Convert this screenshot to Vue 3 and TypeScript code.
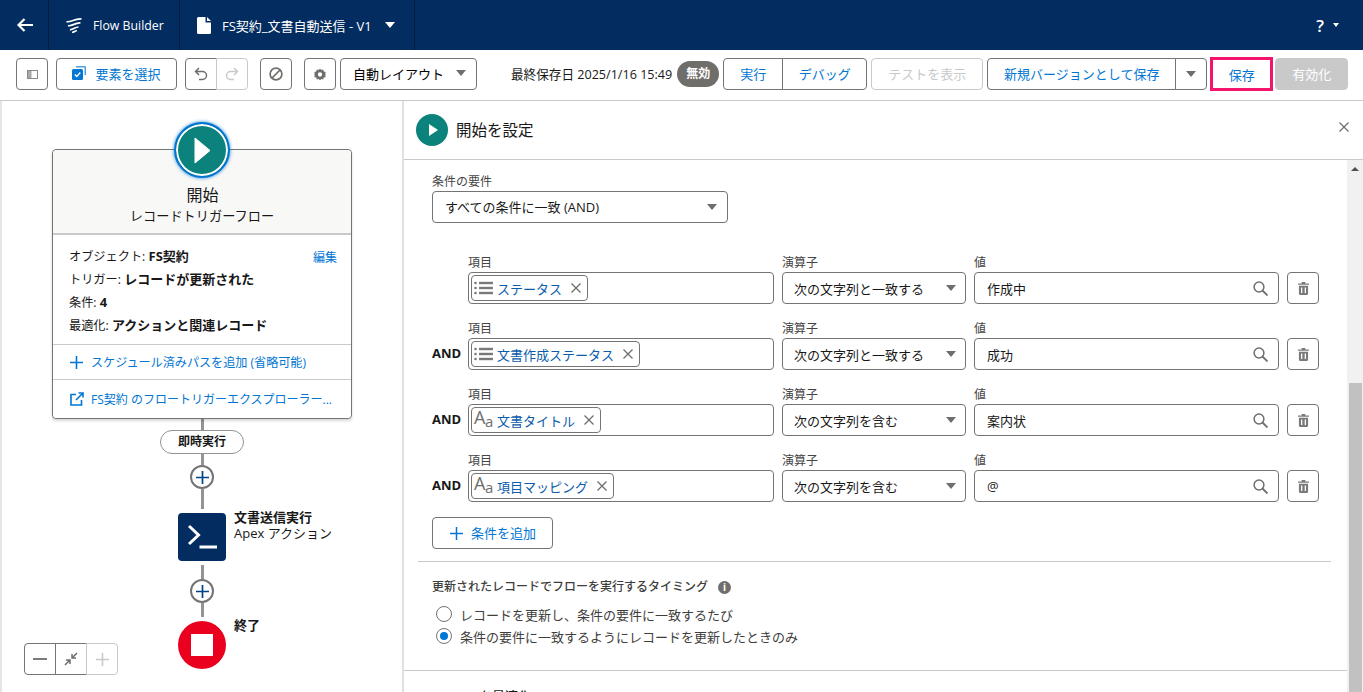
<script setup lang="ts">
interface Row {
  and: boolean
  icon: 'list' | 'text'
  field: string
  op: string
  value: string
}
const rows: Row[] = [
  { and: false, icon: 'list', field: 'ステータス', op: '次の文字列と一致する', value: '作成中' },
  { and: true, icon: 'list', field: '文書作成ステータス', op: '次の文字列と一致する', value: '成功' },
  { and: true, icon: 'text', field: '文書タイトル', op: '次の文字列を含む', value: '案内状' },
  { and: true, icon: 'text', field: '項目マッピング', op: '次の文字列を含む', value: '@' }
]
</script>

<template>
  <div class="app">
    <header class="topbar">
      <div class="tb-cell back">
        <svg width="16" height="14" viewBox="0 0 16 14"><path d="M7.500 1 1.500 7l6 6M1.500 7H16" fill="none" stroke="#fff" stroke-width="2.200" /></svg>
      </div>
      <div class="tb-cell app-name">
        <svg width="16" height="15" viewBox="0 0 16 15"><path d="M.5 3.500C4 5 8 .5 15.500 1M2 7.500C5 9 9 4.500 14.500 5M4 11.500c2 1 5-2.500 8.500-2.500M6 14.500c1.500 0 3-1.500 5-2" fill="none" stroke="#fff" stroke-width="1.700" /></svg>
        <span>Flow Builder</span>
      </div>
      <div class="tb-cell doc">
        <svg width="14" height="17" viewBox="0 0 14 17"><path d="M1.500 0H8.500V5.500H14V15.500A1.500 1.500 0 0 1 12.500 17H1.500A1.500 1.500 0 0 1 0 15.500V1.500A1.500 1.500 0 0 1 1.500 0ZM10 0 14 4H10Z" fill="#fff" /></svg>
        <span class="doc-name">FS契約_文書自動送信 - V1</span>
        <i class="caret white"></i>
      </div>
      <div class="tb-help"><span>?</span><i class="caret white tiny"></i></div>
    </header>

    <div class="toolbar">
      <button class="btn sq first">
        <svg width="11" height="9" viewBox="0 0 11 9"><rect x=".5" y=".5" width="10" height="8" fill="#fff" stroke="#8a8a8a" /><rect x="1" y="1" width="3.500" height="7" fill="#a8a8a8" /></svg>
      </button>
      <button class="btn blue select-el">
        <svg width="14" height="14" viewBox="0 0 14 14"><path d="M4 0h9a1 1 0 0 1 1 1v8h-1.500V1.500H4Z" fill="#0176d3" opacity=".7" /><rect y="3" width="11" height="11" rx="1.500" fill="#0176d3" /><path d="m2.800 8.500 2 2 3.500-4" stroke="#fff" stroke-width="1.300" fill="none" /></svg>
        <span>要素を選択</span>
      </button>
      <div class="group undo">
        <button class="btn sq">
          <svg width="14" height="14" viewBox="0 0 14 14"><path d="M5 1 1.500 4.500 5 8M2 4.500h6.500a4 4 0 0 1 0 8H5" fill="none" stroke="#706e6b" stroke-width="1.500" /></svg>
        </button>
        <button class="btn sq off">
          <svg width="14" height="14" viewBox="0 0 14 14"><path d="M9 1l3.500 3.500L9 8M12 4.500H5.500a4 4 0 0 0 0 8H9" fill="none" stroke="#c9c9c9" stroke-width="1.500" /></svg>
        </button>
      </div>
      <button class="btn sq stop">
        <svg width="14" height="14" viewBox="0 0 14 14"><circle cx="7" cy="7" r="5.900" fill="none" stroke="#706e6b" stroke-width="1.700" /><path d="M3 11 11 3" stroke="#706e6b" stroke-width="1.700" /></svg>
      </button>
      <button class="btn sq gear">
        <svg width="12" height="13" viewBox="0 0 14 14"><path fill-rule="evenodd" fill="#706e6b" d="M7 0l1.400 1.800 2.300-.5.700 2.200 2.200.7-.5 2.300L14 7l-.9.500.5 2.300-2.200.7-.7 2.200-2.300-.5L7 14l-1.400-1.800-2.300.5-.7-2.200-2.200-.7.500-2.300L0 7l.9-.5-.5-2.300 2.200-.7.700-2.200 2.300.5ZM7 4.500a2.500 2.500 0 1 0 0 5 2.500 2.500 0 0 0 0-5Z" /></svg>
      </button>
      <button class="btn layout">
        <span>自動レイアウト</span><i class="caret"></i>
      </button>
      <span class="saved">最終保存日 2025/1/16 15:49</span>
      <span class="badge">無効</span>
      <div class="group run">
        <button class="btn blue run-a">実行</button>
        <button class="btn blue run-b">デバッグ</button>
      </div>
      <button class="btn test">テストを表示</button>
      <div class="group newver">
        <button class="btn blue nv-a">新規バージョンとして保存</button>
        <button class="btn nv-b"><i class="caret"></i></button>
      </div>
      <button class="btn blue save">保存</button>
      <button class="btn activate">有効化</button>
    </div>

    <main class="body">
      <section class="canvas">
        <div class="flow">
          <div class="card">
            <div class="start-ring">
              <svg width="17" height="27" viewBox="0 0 17 27"><path d="M1 1 16 13.500 1 26Z" fill="#fff" stroke="#fff" stroke-linejoin="round" /></svg>
            </div>
            <div class="card-head">
              <div class="card-title">開始</div>
              <div class="card-sub">レコードトリガーフロー</div>
            </div>
            <div class="card-info">
              <a class="edit">編集</a>
              <p>オブジェクト: <b>FS契約</b></p>
              <p>トリガー: <b>レコードが更新された</b></p>
              <p>条件: <b>4</b></p>
              <p>最適化: <b>アクションと関連レコード</b></p>
            </div>
            <div class="card-link first-link">
              <svg width="13" height="13" viewBox="0 0 13 13"><path d="M6.500 0v13M0 6.500h13" stroke="#0176d3" stroke-width="1.600" /></svg>
              <span>スケジュール済みパスを追加 (省略可能)</span>
            </div>
            <div class="card-link second-link">
              <svg width="14" height="14" viewBox="0 0 14 14"><path d="M6 2.500H1v10.500h10.500V8M8.500 1H13v4.500M13 1 6 8" fill="none" stroke="#0176d3" stroke-width="1.600" /></svg>
              <span class="trunc">FS契約 のフロートリガーエクスプローラー...</span>
            </div>
          </div>
          <div class="line h-11"></div>
          <div class="pill">即時実行</div>
          <div class="line h-11"></div>
          <div class="plus">
            <svg width="13" height="13" viewBox="0 0 13 13"><path d="M6.500 0v13M0 6.500h13" stroke="#014486" stroke-width="1.700" /></svg>
          </div>
          <div class="line h-20"></div>
          <div class="node node-apex">
            <div class="apex">
              <svg width="29" height="26" viewBox="0 0 29 26"><path d="M1 2 10.500 11 1 20" fill="none" stroke="#fff" stroke-width="3" /><path d="M11.500 23H29" stroke="#fff" stroke-width="3" /></svg>
            </div>
            <div class="node-label">
              <b>文書送信実行</b>
              <span>Apex アクション</span>
            </div>
          </div>
          <div class="line h-14 top-gap"></div>
          <div class="plus">
            <svg width="13" height="13" viewBox="0 0 13 13"><path d="M6.500 0v13M0 6.500h13" stroke="#014486" stroke-width="1.700" /></svg>
          </div>
          <div class="line h-14"></div>
          <div class="node node-end">
            <div class="end"><i></i></div>
            <div class="node-label"><b>終了</b></div>
          </div>
        </div>
        <div class="zoom">
          <button class="z-btn">
            <svg width="14" height="2" viewBox="0 0 14 2"><path d="M0 1h14" stroke="#706e6b" stroke-width="1.800" /></svg>
          </button>
          <button class="z-btn">
            <svg width="14" height="14" viewBox="0 0 14 14"><path d="M8 6l5-5M8 2v4h4M6 8l-5 5M2 8h4v4" fill="none" stroke="#706e6b" stroke-width="1.500" /></svg>
          </button>
          <button class="z-btn off">
            <svg width="13" height="13" viewBox="0 0 13 13"><path d="M6.500 0v13M0 6.500h13" stroke="#c9c9c9" stroke-width="1.600" /></svg>
          </button>
        </div>
      </section>

      <section class="panel">
        <div class="panel-head">
          <div class="panel-icon">
            <svg width="11" height="14" viewBox="0 0 11 14"><path d="M1 1 10 7 1 13Z" fill="#fff" /></svg>
          </div>
          <h2>開始を設定</h2>
          <svg class="close" width="10" height="10" viewBox="0 0 10 10"><path d="M.5.500l9 9M9.500.500l-9 9" stroke="#706e6b" stroke-width="1.200" /></svg>
        </div>
        <div class="panel-scroll">
          <div class="content">
            <label class="lbl req-lbl">条件の要件</label>
            <div class="box req-select">
              <span>すべての条件に一致 (AND)</span><i class="caret"></i>
            </div>

            <div class="rows">
              <div v-for="r in rows" :key="r.field" class="row">
                <b class="and">{{ r.and ? 'AND' : '' }}</b>
                <div class="col">
                  <label class="lbl">項目</label>
                  <div class="box field">
                    <span class="chip">
                      <svg v-if="r.icon === 'list'" width="19" height="14" viewBox="0 0 19 14"><g fill="#7a7a7a"><circle cx="1.500" cy="2" r="1.300" /><circle cx="1.500" cy="7" r="1.300" /><circle cx="1.500" cy="12" r="1.300" /><rect x="5" y=".8" width="14" height="2.400" /><rect x="5" y="5.800" width="14" height="2.400" /><rect x="5" y="10.800" width="14" height="2.400" /></g></svg>
                      <span v-else class="aa"><span class="aa-big">A</span><span class="aa-small">a</span></span>
                      <span class="chip-text">{{ r.field }}</span>
                      <svg class="chip-x" width="10" height="10" viewBox="0 0 10 10"><path d="M.5.500l9 9M9.500.500l-9 9" stroke="#706e6b" stroke-width="1.300" /></svg>
                    </span>
                  </div>
                </div>
                <div class="col">
                  <label class="lbl">演算子</label>
                  <div class="box op"><span>{{ r.op }}</span><i class="caret"></i></div>
                </div>
                <div class="col">
                  <label class="lbl">値</label>
                  <div class="box val">
                    <span>{{ r.value }}</span>
                    <svg width="15" height="15" viewBox="0 0 15 15"><circle cx="6" cy="6" r="4.900" fill="none" stroke="#706e6b" stroke-width="1.500" /><path d="m9.500 9.500 5 5" stroke="#706e6b" stroke-width="1.800" /></svg>
                  </div>
                </div>
                <button class="trash">
                  <svg width="11" height="13" viewBox="0 0 12 14"><path fill="#7a7a7a" fill-rule="evenodd" d="M4 0h4v1.500h4V3H0V1.500h4ZM1 4h10v8.800A1.200 1.200 0 0 1 9.800 14H2.200A1.200 1.200 0 0 1 1 12.800ZM3.300 6v6h1.400V6ZM7.300 6v6h1.400V6Z" /></svg>
                </button>
              </div>
            </div>

            <button class="box add">
              <svg width="13" height="13" viewBox="0 0 13 13"><path d="M6.500 0v13M0 6.500h13" stroke="#0176d3" stroke-width="1.500" /></svg>
              <span>条件を追加</span>
            </button>
            <div class="sep sep-a"></div>
            <div class="timing">
              <span>更新されたレコードでフローを実行するタイミング</span>
              <i class="info">i</i>
            </div>
            <div class="radio"><i class="dot"></i><span>レコードを更新し、条件の要件に一致するたび</span></div>
            <div class="radio"><i class="dot on"></i><span>条件の要件に一致するようにレコードを更新したときのみ</span></div>
            <div class="sep sep-b"></div>
            <div class="cut">フローを最適化</div>
          </div>
          <div class="scrollbar">
            <i class="arrow"></i>
            <div class="thumb"></div>
          </div>
        </div>
      </section>
    </main>
  </div>
</template>

<style>
html, body { margin: 0; padding: 0; background: #fff; overflow: hidden; }
</style>

<style scoped>
.app { width: 1363px; height: 692px; display: flex; flex-direction: column; overflow: hidden; font-family: "Open Sans", "Noto Sans CJK JP", sans-serif; font-size: 13px; color: #181818; }
button { font: inherit; background: #fff; padding: 0; cursor: default; }
p { margin: 0; }
label { display: block; }

.topbar { height: 50px; flex: none; background: #032d60; display: flex; color: #fff; }
.tb-cell { display: flex; align-items: center; border-right: 1px solid #011e42; height: 50px; box-sizing: border-box; }
.back { width: 49px; padding-left: 17px; box-sizing: border-box; }
.app-name { width: 131px; padding-left: 17px; gap: 11px; font-size: 12.300px; }
.doc { width: 235px; padding-left: 17px; font-size: 13px; }
.doc-name { margin-left: 11px; }
.doc .caret { margin-left: 13px; }
.tb-help { margin-left: auto; display: flex; align-items: center; padding-right: 24px; gap: 9px; font-size: 17px; font-weight: 600; }

.caret { display: inline-block; width: 0; height: 0; border-left: 5px solid transparent; border-right: 5px solid transparent; border-top: 6px solid #706e6b; flex: none; }
.caret.white { border-top-color: #fff; }
.caret.tiny { border-left-width: 3px; border-right-width: 3px; border-top-width: 4px; }

.toolbar { height: 51px; flex: none; box-sizing: border-box; border-bottom: 1px solid #c9c9c9; display: flex; align-items: flex-start; padding: 8px 0 0 16px; }
.btn { height: 32px; box-sizing: border-box; border: 1px solid #747474; border-radius: 4px; background: #fff; display: flex; align-items: center; justify-content: center; white-space: nowrap; padding-bottom: 2px; }
.btn.sq, .btn.nv-b { padding-bottom: 0; }
.btn.blue { color: #0176d3; }
.sq { width: 32px; }
.first { margin-right: 8px; }
.select-el { width: 121px; gap: 9px; margin-right: 8px; }
.group { display: flex; }
.group .btn:first-child { border-radius: 4px 0 0 4px; }
.group .btn:last-child { border-radius: 0 4px 4px 0; margin-left: -1px; }
.undo { margin-right: 12px; }
.undo .off { border-color: #c9c9c9; }
.stop { margin-right: 12px; }
.gear { margin-right: 4px; }
.layout { width: 137px; padding: 0 10px 2px 12px; justify-content: space-between; }
.saved { margin-left: 34px; line-height: 34px; font-size: 12.600px; white-space: nowrap; }
.badge { margin-left: 5px; margin-top: 3px; width: 42px; height: 26px; border-radius: 13px; background: #706e6b; color: #fff; font-size: 12px; font-weight: 700; text-align: center; line-height: 26px; flex: none; }
.run { margin-left: 4px; margin-right: 4px; }
.run-a { width: 60px; }
.run-b { width: 85px; }
.test { width: 112px; border-color: #c9c9c9; color: #c9c9c9; margin-right: 4px; }
.nv-a { width: 189px; }
.nv-b { width: 32px; }
.newver { margin-right: 3px; }
.save { width: 63px; height: 34px; margin-top: -1px; border: 3px solid #f5146b; border-radius: 0; margin-right: 2px; padding-bottom: 0; }
.activate { width: 73px; background: #c9c9c9; border-color: #c9c9c9; color: #fff; }

.body { flex: 1; min-height: 0; display: flex; }
.canvas { width: 404px; flex: none; position: relative; box-sizing: border-box; border-left: 2px solid #e5e5e5; border-right: 2px solid #e0e0e0; overflow: hidden; background: #fff; }
.flow { position: relative; display: flex; flex-direction: column; align-items: center; width: 300px; margin-left: 50px; padding-top: 48px; }
.card { width: 300px; box-sizing: border-box; border: 1px solid #747474; border-radius: 4px; position: relative; background: #fff; box-shadow: 0 2px 3px rgba(0, 0, 0, .16); flex: none; }
.start-ring { position: absolute; left: 121px; top: -28px; width: 56px; height: 56px; box-sizing: border-box; border-radius: 50%; background: #0b827c; border: 2px solid #0176d3; box-shadow: inset 0 0 0 2px #fff, 0 0 3px 1px rgba(1, 118, 211, .5); display: flex; align-items: center; justify-content: center; }
.card-head { height: 85px; box-sizing: border-box; background: #f8f8f6; border-bottom: 2px solid #c9c9c9; border-radius: 4px 4px 0 0; text-align: center; padding-top: 34px; }
.card-title { font-size: 16px; line-height: 22px; padding-left: 1px; }
.card-sub { font-size: 13.200px; line-height: 20px; }
.card-info { height: 110px; box-sizing: border-box; padding: 10px 14px 0 16px; border-bottom: 1px solid #c9c9c9; position: relative; font-size: 12.200px; }
.card-info p { line-height: 23px; white-space: nowrap; }
.card-info b { font-size: 13px; }
.edit { position: absolute; right: 14px; top: 11px; color: #0176d3; line-height: 23px; font-size: 12px; }
.card-link { display: flex; align-items: center; color: #0176d3; box-sizing: border-box; padding-left: 17px; white-space: nowrap; }
.first-link { height: 35px; border-bottom: 1px solid #c9c9c9; gap: 8px; font-size: 12.100px; }
.second-link { height: 38px; background: #fff; gap: 7px; font-size: 12px; border-radius: 0 0 4px 4px; }

.line { width: 3px; background: #939393; flex: none; }
.h-11 { height: 11px; }
.h-20 { height: 20px; }
.h-14 { height: 14px; }
.top-gap { margin-top: 4px; }
.pill { height: 24px; width: 84px; box-sizing: border-box; border: 1px solid #939393; border-radius: 12px; background: #fff; text-align: center; line-height: 21px; font-size: 12px; font-weight: 700; flex: none; }
.plus { width: 24px; height: 24px; flex: none; box-sizing: border-box; border: 2px solid #747474; border-radius: 50%; display: flex; align-items: center; justify-content: center; background: #fff; }
.node { width: 48px; height: 48px; position: relative; margin-top: 4px; flex: none; }
.apex { width: 48px; height: 48px; background: #032d60; border-radius: 4px; display: flex; align-items: center; justify-content: center; }
.end { width: 48px; height: 48px; background: #ea001e; border-radius: 50%; display: flex; align-items: center; justify-content: center; }
.end i { display: block; width: 22px; height: 22px; background: #fff; }
.node-label { position: absolute; left: 56px; top: -4px; display: flex; flex-direction: column; white-space: nowrap; font-size: 13px; line-height: 16px; }
.zoom { position: absolute; left: 22px; top: 542px; display: flex; }
.z-btn { width: 32px; height: 32px; box-sizing: border-box; border: 1px solid #747474; margin-right: -1px; display: flex; align-items: center; justify-content: center; background: #fff; }
.z-btn:first-child { border-radius: 4px 0 0 4px; }
.z-btn:last-child { border-radius: 0 4px 4px 0; border-color: #c9c9c9; margin-right: 0; }

.panel { flex: 1; min-width: 0; display: flex; flex-direction: column; }
.panel-head { height: 59px; flex: none; box-sizing: border-box; border-bottom: 1px solid #c9c9c9; display: flex; align-items: center; padding-left: 12px; position: relative; }
.panel-icon { width: 32px; height: 32px; border-radius: 50%; background: #0b827c; display: flex; align-items: center; justify-content: center; padding-left: 2px; box-sizing: border-box; }
h2 { font-weight: 400; font-size: 15.500px; margin: 0 0 0 8px; line-height: 22px; }
.close { position: absolute; right: 14px; top: 21px; }
.panel-scroll { flex: 1; min-height: 0; display: flex; overflow: hidden; }
.content { width: 943px; flex: none; box-sizing: border-box; padding: 13px 0 0 0; }
.content > .lbl, .req-select, .rows, .add, .timing, .radio, .cut { margin-left: 28px; }
.lbl { font-size: 12px; line-height: 18px; color: #444; }
.req-lbl { height: 18px; }
.box { height: 32px; box-sizing: border-box; border: 1px solid #747474; border-radius: 4px; background: #fff; display: flex; align-items: center; }
.req-select { width: 296px; padding: 0 10px 2px 12px; justify-content: space-between; }
.req-select .caret { margin-top: 2px; }
.rows { margin-top: 31px; display: flex; flex-direction: column; gap: 16px; }
.row { display: grid; grid-template-columns: 28px 306px 184px 305px 32px; column-gap: 8px; align-items: end; }
.and { font-size: 13px; line-height: 31px; margin-bottom: 1px; white-space: nowrap; }
.field { padding-left: 2px; }
.chip { height: 26px; box-sizing: border-box; border: 1px solid #747474; border-radius: 4px; display: inline-flex; align-items: center; padding: 0 6px 0 2px; }
.chip-text { color: #0b5cab; margin: 0 0 0 4px; white-space: nowrap; }
.chip-x { margin-left: 9px; }
.aa { width: 19px; height: 20px; display: block; position: relative; color: #706e6b; flex: none; }
.aa-big { position: absolute; left: 0; top: -4px; font-size: 18px; line-height: 22px; }
.aa-small { position: absolute; left: 11px; top: 1px; font-size: 15px; line-height: 20px; }
.op { padding: 0 9px 0 11px; justify-content: space-between; white-space: nowrap; }
.val { padding: 0 10px 0 12px; justify-content: space-between; }
.trash { width: 32px; height: 32px; box-sizing: border-box; border: 1px solid #747474; border-radius: 4px; display: flex; align-items: center; justify-content: center; }
.add { width: 121px; margin-top: 15px; color: #0176d3; justify-content: flex-start; padding: 0 0 0 17px; gap: 8px; line-height: 28px; }
.sep { height: 1px; background: #c9c9c9; }
.sep-a { margin: 12px 16px 0 14px; }
.timing { margin-top: 16px; display: flex; align-items: center; gap: 10px; font-size: 12px; font-weight: 500; line-height: 18px; color: #3e3e3c; }
.info { width: 13px; height: 13px; border-radius: 50%; background: #706e6b; color: #fff; font-size: 10px; font-weight: 700; font-style: normal; text-align: center; line-height: 13px; }
.radio { display: flex; align-items: center; height: 22px; padding-left: 4px; gap: 8px; color: #3e3e3c; }
.timing + .radio { margin-top: 7px; }
.dot { width: 16px; height: 16px; box-sizing: border-box; border: 1px solid #747474; border-radius: 50%; background: #fff; flex: none; position: relative; }
.dot.on::after { content: ""; position: absolute; left: 3px; top: 3px; width: 8px; height: 8px; border-radius: 50%; background: #0176d3; }
.sep-b { margin-top: 23px; }
.cut { margin-top: 16px; padding-left: 8px; font-size: 13px; font-weight: 500; line-height: 18px; white-space: nowrap; }
.scrollbar { width: 16px; background: #f1f1f1; position: relative; flex: none; }
.arrow { position: absolute; left: 4px; top: 7px; width: 0; height: 0; border-left: 4px solid transparent; border-right: 4px solid transparent; border-bottom: 4px solid #505050; }
.thumb { position: absolute; left: 2px; right: 1px; top: 223px; bottom: 0; background: #c1c1c1; }
</style>
